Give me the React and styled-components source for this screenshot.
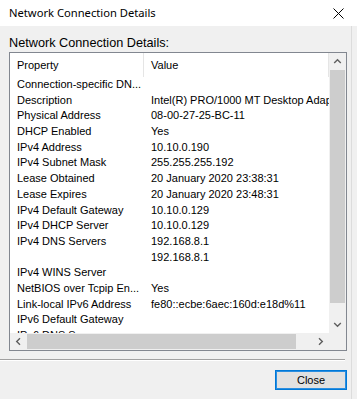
import React from 'react';
import styled, { createGlobalStyle } from 'styled-components';

const rows = [
  ['Connection-specific DN...', ''],
  ['Description', 'Intel(R) PRO/1000 MT Desktop Adapter'],
  ['Physical Address', '08-00-27-25-BC-11'],
  ['DHCP Enabled', 'Yes'],
  ['IPv4 Address', '10.10.0.190'],
  ['IPv4 Subnet Mask', '255.255.255.192'],
  ['Lease Obtained', '20 January 2020 23:38:31'],
  ['Lease Expires', '20 January 2020 23:48:31'],
  ['IPv4 Default Gateway', '10.10.0.129'],
  ['IPv4 DHCP Server', '10.10.0.129'],
  ['IPv4 DNS Servers', '192.168.8.1'],
  ['', '192.168.8.1'],
  ['IPv4 WINS Server', ''],
  ['NetBIOS over Tcpip En...', 'Yes'],
  ['Link-local IPv6 Address', 'fe80::ecbe:6aec:160d:e18d%11'],
  ['IPv6 Default Gateway', ''],
  ['IPv6 DNS Servers', ''],
];

// chevron pointing up, rotated for the other arrows
function Chevron({ dir }) {
  const rot = { up: 0, down: 180, left: -90, right: 90 }[dir];
  return (
    <svg width="9" height="9" viewBox="0 0 9 9" style={{ transform: `rotate(${rot}deg)` }}>
      <path d="M1.2 6 L4.5 2.7 L7.8 6" fill="none" stroke="#606060" strokeWidth="1.4" />
    </svg>
  );
}

export default function App() {
  return (
    <>
      <GlobalStyle />
      <Window>
        <TitleBar>
          <Title>Network Connection Details</Title>
          <CloseGlyph>
            <svg width="11" height="11" viewBox="0 0 11 11">
              <path d="M0.5 0.5 L10.5 10.5 M10.5 0.5 L0.5 10.5" stroke="#000" strokeWidth="1" />
            </svg>
          </CloseGlyph>
        </TitleBar>
        <Body>
          <Label>Network Connection Details:</Label>
          <ListBox>
            <Content>
              <Header>
                <HeadCell>Property</HeadCell>
                <HeadCell>Value</HeadCell>
              </Header>
              {rows.map(([prop, val], i) => (
                <Row key={i}>
                  <Cell>{prop}</Cell>
                  <Cell>{val}</Cell>
                </Row>
              ))}
            </Content>
            <VScroll>
              <ArrowBtn><Chevron dir="up" /></ArrowBtn>
              <VTrack>
                <VThumb />
              </VTrack>
              <ArrowBtn><Chevron dir="down" /></ArrowBtn>
            </VScroll>
            <HScroll>
              <ArrowBtn><Chevron dir="left" /></ArrowBtn>
              <HTrack>
                <HThumb />
              </HTrack>
              <ArrowBtn><Chevron dir="right" /></ArrowBtn>
            </HScroll>
            <Corner />
          </ListBox>
          <Separator />
          <ButtonRow>
            <Button>Close</Button>
          </ButtonRow>
        </Body>
      </Window>
    </>
  );
}

const GlobalStyle = createGlobalStyle`
  html, body {
    margin: 0;
    padding: 0;
    background: #f0f0f0;
  }
`;

const Window = styled.div`
  width: 357px;
  height: 399px;
  display: flex;
  flex-direction: column;
  background: #f0f0f0;
  font-family: "Liberation Sans", Arial, sans-serif;
  color: #000;
  overflow: hidden;
`;

const TitleBar = styled.div`
  height: 26px;
  flex: none;
  background: #fff;
  display: flex;
  align-items: center;
  justify-content: space-between;
  padding: 0 9px;
`;

const Title = styled.div`
  font-family: "Noto Sans", "Open Sans", sans-serif;
  font-size: 11.2px;
  margin-top: -1px;
`;

const CloseGlyph = styled.div`
  display: flex;
  margin-right: 4px;
`;

const Body = styled.div`
  flex: 1;
  display: flex;
  flex-direction: column;
  padding-top: 10px;
  border-right: 1px solid #dcdcdc;
  margin-right: 5px;
`;

const Label = styled.div`
  font-size: 12.7px;
  line-height: 14px;
  height: 14px;
  padding-left: 9px;
  margin-bottom: 2px;
  white-space: nowrap;
`;

const ListBox = styled.div`
  margin-left: 9px;
  width: 338px;
  height: 299px;
  box-sizing: border-box;
  border: 1px solid #828790;
  background: #fff;
  display: grid;
  grid-template-columns: 319px 17px;
  grid-template-rows: 280px 17px;
`;

const Content = styled.div`
  overflow: hidden;
  font-size: 11px;
`;

const Header = styled.div`
  display: grid;
  grid-template-columns: 134px 1fr;
  height: 24px;
`;

const HeadCell = styled.div`
  display: flex;
  align-items: center;
  padding-left: 7px;
  padding-bottom: 1px;
  border-right: 1px solid #e5e5e5;
  white-space: nowrap;
`;

const Row = styled.div`
  display: grid;
  grid-template-columns: 134px 400px;
  height: 15.7px;
  line-height: 15.7px;
`;

const Cell = styled.div`
  padding-left: 7px;
  white-space: nowrap;
  overflow: hidden;
`;

const VScroll = styled.div`
  background: #f0f0f0;
  display: flex;
  flex-direction: column;
`;

const HScroll = styled.div`
  background: #f0f0f0;
  display: flex;
`;

const ArrowBtn = styled.div`
  width: 17px;
  height: 17px;
  flex: none;
  display: flex;
  align-items: center;
  justify-content: center;
`;

const VTrack = styled.div`
  flex: 1;
  padding: 0 1px 13px;
  display: flex;
`;

const VThumb = styled.div`
  flex: 1;
  background: #cdcdcd;
`;

const HTrack = styled.div`
  flex: 1;
  padding: 1px 16px 1px 0;
  display: flex;
`;

const HThumb = styled.div`
  flex: 1;
  background: #cdcdcd;
`;

const Corner = styled.div`
  background: #f0f0f0;
`;

const Separator = styled.div`
  margin: 8px 6px 0 0;
  height: 1px;
  border-top: 1px solid #a0a0a0;
  background: #fff;
`;

const ButtonRow = styled.div`
  display: flex;
  justify-content: flex-end;
  padding: 9px 4px 0 0;
`;

const Button = styled.button`
  width: 72px;
  height: 20px;
  padding: 0;
  box-sizing: border-box;
  background: #e1e1e1;
  border: 1px solid #0078d7;
  box-shadow: inset 0 0 0 1px #2b8ee0;
  font-family: "Liberation Sans", Arial, sans-serif;
  font-size: 11px;
  color: #000;
`;
